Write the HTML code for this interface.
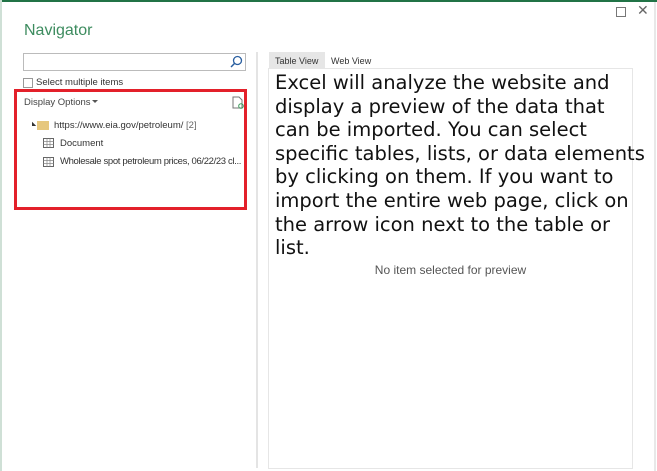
<!DOCTYPE html>
<html><head><style>
body{margin:0;width:657px;height:471px;background:#fff;position:relative;overflow:hidden;font-family:"Liberation Sans",sans-serif;}
.a{position:absolute}
.s{font-size:9.5px;color:#333;white-space:nowrap}
</style></head><body>
<div class="a" style="left:0;top:0;width:657px;height:2px;background:#217346"></div>
<div class="a" style="left:0;top:0;width:2px;height:471px;background:#cfe0d6"></div>
<div class="a" style="left:654px;top:2px;width:2px;height:469px;background:#e8e8e8"></div>
<div class="a" style="left:24px;top:22px;font-size:16px;color:#3d8c5f">Navigator</div>
<div class="a" style="left:616px;top:7px;width:8px;height:8px;border:1px solid #777"></div>
<div class="a" style="left:637px;top:2px;font-size:14px;color:#666">✕</div>
<div class="a" style="left:23px;top:53px;width:221px;height:16px;border:1px solid #bbb"></div>
<svg class="a" style="left:230px;top:55px" width="13" height="13"><circle cx="7.5" cy="5.5" r="4" fill="none" stroke="#2a5fa0" stroke-width="1.3"/><line x1="4.6" y1="8.4" x2="1" y2="12" stroke="#2a5fa0" stroke-width="1.5"/></svg>
<div class="a" style="left:23px;top:78px;width:8px;height:8px;border:1px solid #999"></div>
<div class="a s" style="left:36px;top:77px">Select multiple items</div>
<div class="a" style="left:14px;top:89px;width:227px;height:115px;border:3px solid #e3202a"></div>
<div class="a s" style="left:24px;top:97px;color:#444">Display Options</div>
<div class="a" style="left:92px;top:100px;border:3px solid transparent;border-top:3px solid #555"></div>
<svg class="a" style="left:232px;top:96px" width="12" height="13"><path d="M1 1h6l3 3v8H1z" fill="none" stroke="#777"/><circle cx="9" cy="10" r="2.3" fill="none" stroke="#3a9a5a"/></svg>
<div class="a" style="left:29px;top:123px;border:3px solid transparent;border-right:3px solid #333;transform:rotate(-45deg)"></div>
<div class="a" style="left:37px;top:121px;width:12px;height:9px;background:#e6c77e"></div>
<div class="a s" style="left:54px;top:120px">https://www.eia.gov/petroleum/ <span style="color:#666">[2]</span></div>
<svg class="a" style="left:43px;top:138px" width="11" height="10"><rect x=".5" y=".5" width="10" height="9" fill="none" stroke="#666"/><path d="M.5 3.5h10M.5 6.5h10M4 .5v9M7 .5v9" stroke="#888" stroke-width=".7"/></svg>
<div class="a s" style="left:60px;top:138px">Document</div>
<svg class="a" style="left:43px;top:157px" width="11" height="10"><rect x=".5" y=".5" width="10" height="9" fill="none" stroke="#666"/><path d="M.5 3.5h10M.5 6.5h10M4 .5v9M7 .5v9" stroke="#888" stroke-width=".7"/></svg>
<div class="a s" style="left:60px;top:156px;width:184px;overflow:hidden;letter-spacing:-0.35px">Wholesale spot petroleum prices, 06/22/23 cl...</div>
<div class="a" style="left:256px;top:52px;width:2px;height:416px;background:#e4e4e4"></div>
<div class="a" style="left:269px;top:52px;width:56px;height:16px;background:#e6e6e6"></div>
<div class="a" style="left:275px;top:56px;font-size:9px;color:#333">Table View</div>
<div class="a" style="left:331px;top:56px;font-size:9px;color:#333">Web View</div>
<div class="a" style="left:268px;top:68px;width:363px;height:399px;border:1px solid #e6e6e6"></div>
<div class="a" style="left:275px;top:71px;white-space:nowrap;font-family:'DejaVu Sans',sans-serif;font-size:19.5px;line-height:23.6px;color:#111">Excel will analyze the website and<br>display a preview of the data that<br>can be imported. You can select<br>specific tables, lists, or data elements<br>by clicking on them. If you want to<br>import the entire web page, click on<br>the arrow icon next to the table or<br>list.</div>
<div class="a" style="left:269px;top:263px;width:363px;text-align:center;font-size:12px;color:#555">No item selected for preview</div>
</body></html>
